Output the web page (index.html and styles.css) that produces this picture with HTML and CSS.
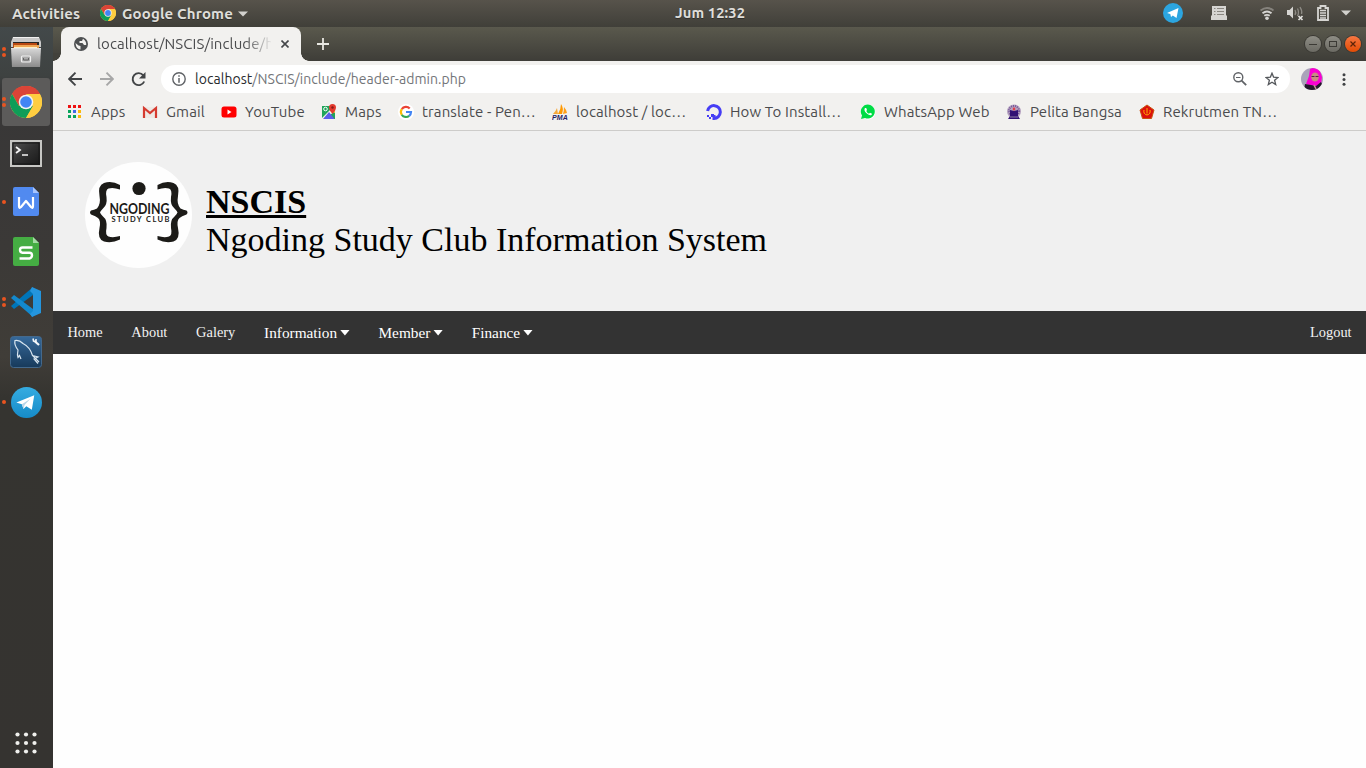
FILE: index.html
```html
<!DOCTYPE html>
<html lang="id">
<head>
<meta charset="utf-8">
<title>NSCIS</title>
<link rel="stylesheet" href="styles.css">
</head>
<body>
<svg width="0" height="0" class="defs">
  <defs>
    <symbol id="chrome" viewBox="0 0 32 32">
      <circle cx="16" cy="16" r="16" fill="#ffcd40"/>
      <path d="M16 16 2.1 8A16 16 0 0 1 29.9 8Z" fill="#db4437"/>
      <path d="M16 8H29.9A16 16 0 0 0 2.1 8L9 20Z" fill="#db4437"/>
      <path d="M2.1 8A16 16 0 0 0 16 32L23 20 16 16 9 20Z" fill="#0f9d58"/>
      <path d="M16 8H29.9A16 16 0 0 1 16 32L23 20Z" fill="#ffcd40"/>
      <circle cx="16" cy="16" r="7.3" fill="#f3f3f3"/><circle cx="16" cy="16" r="5.8" fill="#4285f4"/>
    </symbol>
    <linearGradient id="tg" x2="0" y2="1"><stop stop-color="#35ace1"/><stop offset="1" stop-color="#168bc8"/></linearGradient>
    <symbol id="telegram" viewBox="0 0 32 32">
      <circle cx="16" cy="16" r="16" fill="url(#tg)"/>
      <path d="M5.500 16 24 8.500 21.500 23.500 15.800 19.800 12.900 22.800 11.200 17.800Z" fill="#fff"/>
      <path d="M11.200 17.800 20 12 14 18.500 12.900 22.800Z" fill="#b9d6e8"/>
    </symbol>
    <linearGradient id="metal" x2="0" y2="1"><stop stop-color="#d8d8d8"/><stop offset="1" stop-color="#8b8b8b"/></linearGradient>
    <linearGradient id="screen" x2="1" y2="1"><stop stop-color="#555"/><stop offset=".5" stop-color="#303030"/><stop offset="1" stop-color="#171717"/></linearGradient>
    <linearGradient id="mysql" x2="0" y2="1"><stop stop-color="#36699a"/><stop offset="1" stop-color="#173a5b"/></linearGradient>
  </defs>
</svg>

<header class="topbar">
  <span class="activities">Activities</span>
  <svg class="app-icon" width="16" height="16"><use href="#chrome"/></svg>
  <span class="app-name">Google Chrome</span>
  <svg class="app-caret" width="10" height="6"><path d="M0 .5H10L5 5.5Z" fill="#d2d1cd"/></svg>
  <span class="clock">Jum 12:32</span>
  <div class="tray">
    <svg width="20" height="20" viewBox="0 0 20 20"><circle cx="10" cy="10" r="10" fill="#2ca5e0"/><path d="M4 10 15.5 5 13.5 15 9.8 12.4 8 14 7.3 11Z" fill="#fff"/></svg>
    <svg class="t-list" width="16" height="14"><path d="M1 0H15V9L16 10V14H0V10L1 9Z" fill="#d6d5d2"/><path d="M3 2.500H4.500M6 2.500H13M3 5.500H4.500M6 5.500H13M3 8.500H4.500M6 8.500H13" stroke="#8a8781"/></svg>
    <svg class="t-wifi" width="14" height="13" fill="none" stroke-width="1.8"><path d="M.5 3.5Q7-1.5 13.5 3.5" stroke="#85827c"/><path d="M2.500 6.300Q7 2.800 11.500 6.300M4.300 8.800Q7 6.800 9.700 8.800" stroke="#d6d5d2"/><circle cx="7" cy="11.200" r="1.800" fill="#d6d5d2"/></svg>
    <svg class="t-vol" width="17" height="15"><path d="M0 4H2.500L6 .5V12.500L2.500 9H0Z" fill="#d6d5d2"/><path d="M8 4Q9.500 6.500 8 9M10.500 2.500Q12.500 6.500 10.500 10M13 1Q15.500 5 14.500 8" fill="none" stroke="#8e8b85" stroke-width="1.300"/><path d="M11.500 10 15.500 14M15.500 10 11.500 14" stroke="#e3e2df" stroke-width="1.700"/></svg>
    <svg class="t-bat" width="12" height="16" fill="none" stroke="#d6d5d2"><path d="M1 3H3.500V1H8.500V3H11V15H1Z" stroke-width="1.800"/><path d="M3 5.500H9M3 8H9M3 10.500H9M3 13H9" stroke-width="1.300"/></svg>
    <svg class="t-caret" width="10" height="6"><path d="M0 .5H10L5 5.500Z" fill="#d2d1cd"/></svg>
  </div>
</header>

<div class="desktop">
  <aside class="dock">
    <div class="slot two"><svg width="32" height="32" viewBox="0 0 32 32"><path d="M3 1H29L31 6V11H1V6Z" fill="#c9c9c9"/><path d="M3 1.500H29" stroke="#f1f1f1"/><rect x="3" y="6" width="26" height="7" fill="#252525"/><path d="M3 7H27V13H3Z" fill="#b94913"/><path d="M4 9H29V13H4Z" fill="#efa553"/><path d="M4 11.500H27" stroke="#fff1c9"/><path d="M1 12H31L30 31H2Z" fill="url(#metal)"/><path d="M1 12.500H31" stroke="#e2e2e2"/><rect x="11.500" y="20" width="9" height="6" rx="1" fill="#aaa" stroke="#f0f0f0" stroke-width="1.200"/><path d="M13.500 22V24H18.500V22" fill="none" stroke="#666"/></svg></div>
    <div class="slot two active"><svg width="32" height="32"><use href="#chrome"/></svg></div>
    <div class="slot terminal"><svg width="32" height="27" viewBox="0 0 32 27"><rect x="1" y="1" width="30" height="25" fill="url(#screen)" stroke="#c7c7c4" stroke-width="2"/><path d="M3 3H29V24H3Z" fill="none" stroke="#171717"/><path d="M6 7 10 10 6 13" fill="none" stroke="#f5f5f5" stroke-width="1.800"/><path d="M12 15H18" stroke="#f5f5f5" stroke-width="1.500"/></svg></div>
    <div class="slot one doc"><svg width="26" height="29" viewBox="0 0 26 29"><path d="M2 0H20L26 6V27Q26 29 24 29H2Q0 29 0 27V2Q0 0 2 0Z" fill="#518af0"/><path d="M20 0V6H26Z" fill="#a7c5ff"/><path d="M6 10V19Q6 22 8 20L13 14 18 20Q20 22 20 19V10" fill="none" stroke="#fff" stroke-width="2.200" stroke-linejoin="round"/></svg></div>
    <div class="slot doc"><svg width="26" height="29" viewBox="0 0 26 29"><path d="M2 0H20L26 6V27Q26 29 24 29H2Q0 29 0 27V2Q0 0 2 0Z" fill="#45ad43"/><path d="M20 0V6H26Z" fill="#a5dca4"/><path d="M19.500 10.500H9.500Q7 10.500 7 13T9.500 15.700H16.500Q19 15.700 19 18.300T16.500 21.500H6.500" fill="none" stroke="#fff" stroke-width="2.400"/></svg></div>
    <div class="slot two"><svg width="32" height="32" viewBox="0 0 32 32"><path d="M1 20 23 1V9L4 23Z" fill="#0075b8"/><path d="M4 9 23 23 23 31 1 12Z" fill="#1389ce"/><path d="M22 1 31 5V27L22 31 20 28 23 25V8L20 5Z" fill="#2495dd"/></svg></div>
    <div class="slot"><svg width="32" height="32" viewBox="0 0 32 32"><rect x=".5" y=".5" width="31" height="31" rx="3" fill="url(#mysql)" stroke="#44698c"/><path d="M11 23 9.500 19.500 8 21.500Q7 19 8 14Q4 9 5 4.500Q9 3.500 13 7.500Q20 11 22.500 19.500L29 26M22.500 19.500 28 21 24 23 28 27.500" fill="none" stroke="#d9e6f0" stroke-width="1.200"/><path d="M25 5.500 29 9" stroke="#f4f7fa" stroke-width="2.200"/><path d="M23 2.500 23.500 5 26 5.500 26 3" fill="none" stroke="#f4f7fa" stroke-width="1.500"/></svg></div>
    <div class="slot one"><svg width="31" height="31"><use href="#telegram"/></svg></div>
    <svg class="apps-grid" width="22" height="22" fill="#f0f0ed"><circle cx="2.500" cy="2.500" r="2.100"/><circle cx="11" cy="2.500" r="2.100"/><circle cx="19.500" cy="2.500" r="2.100"/><circle cx="2.500" cy="11" r="2.100"/><circle cx="11" cy="11" r="2.100"/><circle cx="19.500" cy="11" r="2.100"/><circle cx="2.500" cy="19.500" r="2.100"/><circle cx="11" cy="19.500" r="2.100"/><circle cx="19.500" cy="19.500" r="2.100"/></svg>
  </aside>

  <main class="browser">
    <div class="tabs">
      <div class="tab">
        <svg width="14" height="14" viewBox="0 0 14 14"><circle cx="7" cy="7" r="7" fill="#4d4f51"/><path d="M1.500 6 4.500 8.500 6.500 9V12.500Q2 12 1.500 6M9 1.800 8 4H5.500V6H8.500L10 8H12.200Q12.500 4 9 1.800" fill="#f2f1ef"/></svg>
        <span class="tab-title">localhost/NSCIS/include/h</span>
        <svg class="tab-close" width="8" height="8"><path d="M.5.500 7.500 7.500M7.500.500.500 7.500" stroke="#45474a" stroke-width="1.600"/></svg>
      </div>
      <svg class="new-tab" width="12" height="12"><path d="M6 0V12M0 6H12" stroke="#e8e7e2" stroke-width="1.800"/></svg>
      <div class="window-buttons">
        <i><svg width="16" height="16"><path d="M4 8.500H12" stroke="#3b3a35"/></svg></i>
        <i><svg width="16" height="16"><rect x="4.500" y="5.500" width="7" height="5" fill="none" stroke="#3b3a35"/></svg></i>
        <i class="close"><svg width="16" height="16"><path d="M5.500 5.500 10.500 10.500M10.500 5.500 5.500 10.500" stroke="#5c2308" stroke-width="1.200"/></svg></i>
      </div>
    </div>

    <div class="toolbar">
      <svg width="14" height="14" fill="none" stroke="#424446" stroke-width="1.900"><path d="M14 7H1.500M7.500.700 1.200 7 7.500 13.300"/></svg>
      <svg width="14" height="14" fill="none" stroke="#a7a7a7" stroke-width="1.900"><path d="M0 7H12.500M6.500.700 12.800 7 6.500 13.300"/></svg>
      <svg class="reload" width="15" height="15"><path d="M12.300 3.300A6 6 0 1 0 13.200 9.500" fill="none" stroke="#424446" stroke-width="1.900"/><path d="M14.500 0V6.500H8Z" fill="#424446"/></svg>
      <div class="address">
        <svg width="14" height="14"><circle cx="7" cy="7" r="6.200" fill="none" stroke="#606367" stroke-width="1.400"/><path d="M7 3.200V4.700M7 6V10.700" stroke="#606367" stroke-width="1.500"/></svg>
        <span class="url"><b>localhost</b>/NSCIS/include/header-admin.php</span>
        <svg class="zoom" width="14" height="14" fill="none" stroke="#606367"><circle cx="5.300" cy="5.300" r="4.500" stroke-width="1.400"/><path d="M8.600 8.600 13.200 13.200" stroke-width="1.800"/><path d="M3 5.500H7.500"/></svg>
        <svg width="14" height="14" viewBox="0 0 14 14"><path d="M7 1.200 8.600 5.100 13 5.500 9.600 8.200 10.700 12.500 7 10.200 3.300 12.500 4.400 8.200 1 5.500 5.400 5.100Z" fill="none" stroke="#55585c" stroke-width="1.300"/></svg>
      </div>
      <svg class="avatar" width="22" height="22" viewBox="0 0 22 22"><clipPath id="av"><circle cx="11" cy="11" r="11"/></clipPath><g clip-path="url(#av)"><path fill="#aaa3ba" d="M0 0H22V22H0Z"/><path d="M9 1Q14-2 19 3L21 9 20 16 14 19 5 16 8 8Z" fill="#fa00d2"/><ellipse cx="14" cy="9" rx="3.800" ry="4.500" fill="#c78c81"/><path d="M10.500 8.500H13.500M14.500 8.500H17.500" stroke="#5a1c48"/><path d="M4 16 10 17 15 18 20 14 22 18V22H3Z" fill="#25182c"/><path d="M13 17 15 21" stroke="#c49695" stroke-width="1.500"/></g></svg>
      <svg class="more" width="4" height="13" fill="#404244"><circle cx="2" cy="1.700" r="1.500"/><circle cx="2" cy="6.500" r="1.500"/><circle cx="2" cy="11.300" r="1.500"/></svg>
    </div>

    <nav class="bookmarks">
      <a class="bm-apps"><svg width="16" height="16"><path d="M1 1h3v3H1z M6 1h3v3H6z M11 1h3v3h-3z" fill="#e11"/><path d="M1 6h3v3H1z M1 11h3v3H1z M6 11h3v3H6z" fill="#08a45b"/><path d="M6 6h3v3H6z" fill="#4169e8"/><path d="M11 6h3v3h-3z M11 11h3v3h-3z" fill="#fbb90b"/></svg><span>Apps</span></a>
      <a class="bm-gmail"><svg width="16" height="16"><path d="M1 3H15V14H1Z" fill="#eee9e5"/><path d="M2 14V4L8 9 14 4V14" fill="none" stroke="#d53b30" stroke-width="2.200"/></svg><span>Gmail</span></a>
      <a class="bm-youtube"><svg width="16" height="16"><rect x=".5" y="2.500" width="15" height="11" rx="2.500" fill="#f00"/><path d="M6.500 5.500V10.500L10.500 8Z" fill="#fff"/></svg><span>YouTube</span></a>
      <a class="bm-maps"><svg width="16" height="16"><path d="M1 2H14V15H1Z" fill="#20a45a"/><path d="M1 14 11 4 14 7 4 15H1Z" fill="#f4f3ec"/><path d="M11 4 14 2V9L9 7Z" fill="#f6c63c"/><path d="M8 8 13.500 15H2Z" fill="#5b5eea"/><circle cx="4.500" cy="5" r="1.800" fill="none" stroke="#fff"/><path d="M11.500 10Q8 6 8 3.500A3.500 3.500 0 0 1 15 3.500Q15 6 11.500 10" fill="#e33b2f"/><circle cx="11.500" cy="3.500" r="1.200" fill="#861b17"/></svg><span>Maps</span></a>
      <a class="bm-translate"><svg width="16" height="16"><circle cx="8" cy="8" r="8" fill="#fff"/><g fill="none" stroke-width="2.200"><path d="M3.800 5.200A5 5 0 0 1 11.700 4.500" stroke="#ea4335"/><path d="M3.800 5.200A5 5 0 0 0 3.800 10.800" stroke="#fbbc05"/><path d="M3.800 10.800A5 5 0 0 0 11.200 11.800" stroke="#34a853"/><path d="M11.200 11.800A5 5 0 0 0 13 8H8" stroke="#4285f4"/></g></svg><span>translate - Pen…</span></a>
      <a class="bm-pma"><svg width="16" height="16"><path d="M1 10Q4 7 5 4L6 10Z" fill="#f5a83b"/><path d="M6 10Q9 5 9 0 12 4 10 10Z" fill="#f90"/><path d="M11 10Q12 7 12 3 14 5 15 9Z" fill="#ff9f18"/><text x="0" y="15.500" textLength="16" lengthAdjust="spacingAndGlyphs" class="pma">PMA</text></svg><span>localhost / loc…</span></a>
      <a class="bm-how"><svg width="16" height="16"><path d="M1.600 7A6.400 6.400 0 1 1 8 14.400V11" fill="none" stroke="#463df5" stroke-width="3"/><path d="M5 10H8V13H5ZM3 13H5V15H3ZM1 11H3V13H1Z" fill="#463df5"/></svg><span>How To Install…</span></a>
      <a class="bm-wa"><svg width="16" height="16"><circle cx="8" cy="8" r="7.500" fill="#fff"/><path d="M1 15 2 11.500A7 7 0 1 1 5 14Z" fill="#00dc45"/><path d="M5 4Q3.500 6 6 8.800 9 12 11.500 11L12 9.700 10 8.700 9 9.700Q7 9 6.300 7L7 6 6.200 4Z" fill="#fff"/></svg><span>WhatsApp Web</span></a>
      <a class="bm-pelita"><svg width="16" height="16"><circle cx="8" cy="7.500" r="7" fill="#b6a3c0"/><circle cx="8" cy="7" r="5" fill="none" stroke="#745799" stroke-dasharray="1 1" stroke-width="2"/><path d="M4 6 8 7 12 6V12L14 15H2L4 12Z" fill="#321174"/><path d="M6.500 5 8 3 9.500 5 8 7Z" fill="#e43a45"/><path d="M4 13H12" stroke="#9181a6"/></svg><span>Pelita Bangsa</span></a>
      <a class="bm-rekrut"><svg width="16" height="16"><path d="M8 1 15 6 12.500 14.500H3.500L1 6Z" fill="#dc100c" stroke="#c8540c"/><path d="M5 6Q4 10 8 11 12 10 11 6M8 4V9.500" fill="none" stroke="#ffae00"/></svg><span>Rekrutmen TN…</span></a>
    </nav>

    <section class="page">
      <header class="hero">
        <svg class="logo" width="107" height="106" viewBox="0 0 107 106">
          <ellipse cx="53.500" cy="53" rx="53.500" ry="53" fill="#fefefe"/>
          <circle cx="54" cy="26.500" r="6.600" fill="#1c1b18"/>
          <g fill="#1c1b18"><path d="M35 23Q27 18.500 19 21 12.500 23.500 14.500 34 16 42 12 46.500 9 48 6 48.500 4 50.500 6 52.500 11 54 13 56 16 58.500 14.500 66 12 77 19 79.500 27 81.500 35 77.500V74Q28 76 23.500 74.500 20 73 21.500 66 22.500 58 18 54.500 15.500 52 15 50.500 15.500 49 18 46.500 22.500 43 21.500 35 20 28 23.500 26.500 28 25 35 27.500Z"/><path d="M72.500 23Q80.500 18.500 88.500 21 95 23.500 93 34 91.500 42 95.500 46.500 98.500 48 101.500 48.500 103.500 50.500 101.500 52.500 96.500 54 94.500 56 91.500 58.500 93 66 95.500 77 88.500 79.500 80.500 81.500 72.500 77.500V74Q79.500 76 84 74.500 87.500 73 86 66 85 58 89.500 54.500 92 52 92.500 50.500 92 49 89.500 46.500 85 43 86 35 87.500 28 84 26.500 79.500 25 72.500 27.500Z"/></g>
          <text x="24.500" y="51.500" textLength="60" lengthAdjust="spacingAndGlyphs" class="logo-main">NGODING</text>
          <text x="26.500" y="60" textLength="58" class="logo-sub">STUDY CLUB</text>
        </svg>
        <div class="brand"><strong>NSCIS</strong><span>Ngoding Study Club Information System</span></div>
      </header>
      <nav class="menu">
        <a>Home</a><a>About</a><a>Galery</a>
        <button>Information <i></i></button><button>Member <i></i></button><button>Finance <i></i></button>
        <a class="logout">Logout</a>
      </nav>
    </section>
  </main>
</div>
</body>
</html>
```
FILE: styles.css
```css
* { box-sizing: border-box; }
body { margin: 0; width: 1366px; height: 768px; overflow: hidden; background: #fefefe; font-family: Ubuntu, "Noto Sans", sans-serif; }
svg { display: block; flex: none; }
.defs { position: absolute; }
.topbar { position: relative; display: flex; align-items: center; height: 27px; padding-left: 12px; background: linear-gradient(#57534b, #403f39); color: #dfdeda; font-size: 15px; font-weight: 700; letter-spacing: .15px; line-height: 27px; white-space: nowrap; text-shadow: 0 1px #302f2b; }
.activities { width: 88px; }
.app-icon { margin: -1px 6px 0 0; }
.app-name { width: 116px; }
.clock { position: absolute; left: 675px; top: -1px; font-size: 14.700px; letter-spacing: .1px; }
.tray { display: flex; align-items: center; margin: -1px 0 0 auto; padding-right: 15px; }
.t-list { margin-left: 28px; }
.t-wifi { margin-left: 33px; }
.t-vol { margin-left: 13px; }
.t-bat { margin-left: 13px; }
.t-caret { margin-left: 12px; }
.desktop { display: flex; height: 741px; }
.dock { position: relative; display: flex; flex: none; flex-direction: column; align-items: center; width: 53px; padding-right: 1px; background: linear-gradient(180deg, #43494a 0, #3e4241 48px, #383737 65px, #3b3937 220px, #403d38 330px, #353430 370px, #353330 100%); }
.slot { position: relative; display: flex; flex: none; align-items: center; justify-content: center; width: 48px; height: 48px; margin-bottom: 2px; border-radius: 3px; }
.slot:first-child { margin-top: 1px; }
.terminal { padding-top: 3px; }
.active { background: #5c5b5a; }
.doc svg { margin-top: -1px; }
.one::before, .two::before { content: ""; position: absolute; left: 0; top: 22px; width: 4px; height: 4px; border-radius: 50%; background: #e95420; }
.two::before { top: 19px; box-shadow: 0 6px #e95420; }
.apps-grid { margin-top: auto; margin-bottom: 14px; }
.browser { display: flex; flex-direction: column; width: 1313px; }
.tabs { display: flex; height: 34px; padding-left: 8px; background: linear-gradient(#5a594d, #3e3d38); }
.tab { position: relative; display: flex; align-items: center; width: 240px; padding: 0 12px 0 13px; border-radius: 8px 8px 0 0; background: #f2f1ef; }
.tab::before, .tab::after { content: ""; position: absolute; bottom: 0; left: -8px; width: 8px; height: 8px; background: radial-gradient(circle at 0 0, #42413b 7.500px, #f2f1ef 8px); }
.tab::after { left: 240px; background: radial-gradient(circle at 100% 0, #42413b 7.500px, #f2f1ef 8px); }
.tab-title { width: 174px; margin: -1px 0 0 9px; overflow: hidden; font-size: 15px; letter-spacing: .1px; white-space: nowrap; color: #4b4c4e; -webkit-mask-image: linear-gradient(90deg, #000 148px, transparent 176px); mask-image: linear-gradient(90deg, #000 148px, transparent 176px); }
.tab-close { margin-left: auto; }
.new-tab { margin: 11px 0 0 16px; }
.window-buttons { display: flex; gap: 4px; margin: 9px 5px 0 auto; }
.window-buttons i { width: 16px; height: 16px; border-radius: 50%; background: linear-gradient(#8e8d85, #6b6a63); box-shadow: 0 0 0 1px #3a3934; }
.window-buttons .close { background: linear-gradient(#f77742, #e34b04); }
.toolbar { display: flex; align-items: center; height: 36px; padding-left: 15px; background: #f2f1ef; }
.toolbar > svg { margin-right: 18px; }
.toolbar > .reload { margin-left: -1px; }
.address { display: flex; align-items: center; width: 1129px; height: 28px; margin-left: -3px; padding: 0 11px; border-radius: 14px; background: #fff; }
.url { margin-left: 9px; color: #737579; font-size: 14px; letter-spacing: .04px; white-space: nowrap; }
.url b { color: #292a2d; font-weight: 400; }
.zoom { margin: 0 18px 0 auto; }
.toolbar > .avatar { margin: 0 19px 0 11px; }
.toolbar > .more { margin: 0; }
.bookmarks { display: flex; height: 34px; padding: 7px 0 0 14px; border-bottom: 1px solid #cdccca; background: #f2f1ef; color: #4a4b4d; font-size: 15px; letter-spacing: .13px; }
.bookmarks a { display: flex; gap: 8px; height: 16px; line-height: 16px; white-space: nowrap; }
.bm-apps { width: 75px; }
.bm-gmail { width: 79px; }
.bm-youtube { width: 100px; }
.bm-maps { width: 77px; }
.bm-translate, .bm-pma, .bm-how { width: 154px; }
.bm-wa { width: 146px; }
.bm-pelita { width: 133px; }
.bm-rekrut { width: 145px; }
.pma { font: italic bold 6.500px "Liberation Sans", sans-serif; fill: #251c64; }
.page { flex: 1; background: #fefefe; font-family: "Liberation Serif", serif; }
.hero { display: flex; height: 180px; padding: 31px 0 0 32px; background: #f0f0f0; }
.brand { display: flex; flex-direction: column; margin: 21px 0 0 14px; color: #000; font-size: 34px; line-height: 38px; white-space: nowrap; }
.brand strong { text-decoration: underline; }
.logo-main { font: 700 14.500px Lato, sans-serif; fill: #1c1b18; }
.logo-sub { font: 700 7.500px Lato, sans-serif; fill: #1c1b18; }
.menu { display: flex; height: 43px; background: #333; color: #f2f2f2; font-size: 14.400px; line-height: 43px; }
.menu a { padding: 0 14.400px; }
.menu button { display: flex; align-items: center; padding: 1px 14.200px 0 14.400px; border: 0; background: none; color: #fff; font: 15.300px/42px "Liberation Serif", serif; }
.menu i { width: 10px; height: 6px; margin: -1px 0 0 2.800px; background: #fff; clip-path: polygon(0 0, 100% 0, 50% 100%); }
.menu .logout { margin-left: auto; }
```
